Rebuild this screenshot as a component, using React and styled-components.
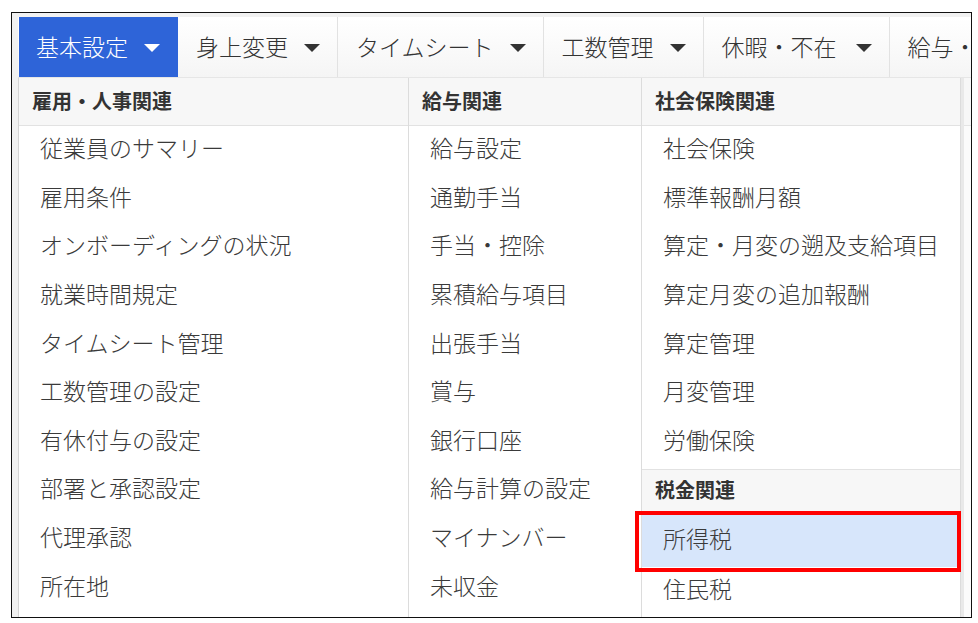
import React from "react";
import styled, { createGlobalStyle } from "styled-components";

const Global = createGlobalStyle`
  html, body { margin: 0; padding: 0; background: #ffffff; }
  body { font-family: "Noto Sans CJK JP", "Noto Sans", sans-serif; }
  * { box-sizing: border-box; }
`;

const Page = styled.div`
  padding: 12px 0 0 11px;
`;

const Frame = styled.div`
  width: 961px;
  height: 606px;
  border: 1px solid #111;
  background: #f1f1f1;
  padding: 4px 0 0 6px;
  overflow: hidden;
  display: flex;
  flex-direction: column;
`;

const NavBar = styled.div`
  display: flex;
  height: 60px;
  flex-shrink: 0;
  padding-left: 1px;
  background: linear-gradient(#ffffff, #f6f6f6);
  overflow: hidden;
`;

const Tab = styled.div`
  flex-shrink: 0;
  display: flex;
  align-items: center;
  gap: ${(p) => 16 + (p.$extra || 0)}px;
  padding: 0 17px 2px ${(p) => (p.$first ? 17 : 18)}px;
  font-size: 23px;
  font-weight: 300;
  white-space: nowrap;
  color: ${(p) => (p.$active ? "#ffffff" : "#333333")};
  background: ${(p) => (p.$active ? "#2e64d8" : "linear-gradient(#ffffff, #f5f5f5)")};
  border-right: 1px solid ${(p) => (p.$active ? "#2e64d8" : "#e2e2e2")};
  line-height: 1;
`;

const Caret = styled.span`
  width: 0;
  height: 0;
  border-left: 8px solid transparent;
  border-right: 8px solid transparent;
  border-top: 8px solid ${(p) => (p.$light ? "#ffffff" : "#333333")};
  margin-top: 3px;
`;

const Dropdown = styled.div`
  flex: 1;
  display: flex;
  background: #ffffff;
  border-left: 1px solid #d4d4d4;
  border-top: 1px solid #e6e6e6;
`;

const Column = styled.div`
  width: ${(p) => p.$w}px;
  flex-shrink: 0;
  border-right: 1px solid #dcdcdc;
  display: flex;
  flex-direction: column;
`;

const Strip = styled.div`
  flex: 1;
  border-left: 3px solid #e9e9e9;
  background: #fbfbfb;
  display: flex;
  flex-direction: column;
`;

const StripTop = styled.div`
  height: 48px;
  background: #f7f7f7;
  border-bottom: 1px solid #e4e4e4;
`;

const Header = styled.div`
  height: ${(p) => (p.$top ? 48 : 45)}px;
  flex-shrink: 0;
  display: flex;
  align-items: center;
  padding-left: 13px;
  padding-bottom: ${(p) => (p.$top ? 2 : 4)}px;
  background: #f7f7f7;
  border-bottom: 1px solid #e2e2e2;
  border-top: ${(p) => (p.$top ? "none" : "1px solid #e2e2e2")};
  margin-top: ${(p) => (p.$top ? 0 : 3)}px;
  font-size: 20px;
  font-weight: 700;
  color: #333333;
`;

const Item = styled.div`
  position: relative;
  height: ${(p) => (p.$h ? p.$h : 48.6)}px;
  flex-shrink: 0;
  display: flex;
  align-items: center;
  padding-left: 21px;
  padding-bottom: 6px;
  font-size: 23px;
  font-weight: 300;
  color: #3a3a3a;
  white-space: nowrap;
  background: ${(p) => (p.$selected ? "#d7e6fb" : "transparent")};
`;

const Marker = styled.span`
  position: absolute;
  left: -7px;
  right: -1px;
  top: -3px;
  bottom: -5px;
  border: 4.5px solid #ff0000;
  pointer-events: none;
`;

const tabs = [
  { label: "基本設定" },
  { label: "身上変更" },
  { label: "タイムシート" },
  { label: "工数管理" },
  { label: "休暇・不在", extra: 3 },
  { label: "給与・" },
];

const col1 = [
  "従業員のサマリー",
  "雇用条件",
  "オンボーディングの状況",
  "就業時間規定",
  "タイムシート管理",
  "工数管理の設定",
  "有休付与の設定",
  "部署と承認設定",
  "代理承認",
  "所在地",
];

const col2 = [
  "給与設定",
  "通勤手当",
  "手当・控除",
  "累積給与項目",
  "出張手当",
  "賞与",
  "銀行口座",
  "給与計算の設定",
  "マイナンバー",
  "未収金",
];

const col3a = [
  "社会保険",
  "標準報酬月額",
  "算定・月変の遡及支給項目",
  "算定月変の追加報酬",
  "算定管理",
  "月変管理",
  "労働保険",
];

export default function App() {
  return (
    <Page>
      <Global />
      <Frame>
        <NavBar>
          {tabs.map((t, i) => (
            <Tab key={t.label} $active={i === 0} $first={i === 0} $extra={t.extra}>
              {t.label}
              <Caret $light={i === 0} />
            </Tab>
          ))}
        </NavBar>
        <Dropdown>
          <Column $w={390}>
            <Header $top>雇用・人事関連</Header>
            {col1.map((t) => (
              <Item key={t}>{t}</Item>
            ))}
          </Column>
          <Column $w={233}>
            <Header $top>給与関連</Header>
            {col2.map((t) => (
              <Item key={t}>{t}</Item>
            ))}
          </Column>
          <Column $w={319}>
            <Header $top>社会保険関連</Header>
            {col3a.map((t) => (
              <Item key={t}>{t}</Item>
            ))}
            <Header>税金関連</Header>
            <Item $selected $h={53}>
              所得税
              <Marker />
            </Item>
            <Item>住民税</Item>
          </Column>
          <Strip>
            <StripTop />
          </Strip>
        </Dropdown>
      </Frame>
    </Page>
  );
}
